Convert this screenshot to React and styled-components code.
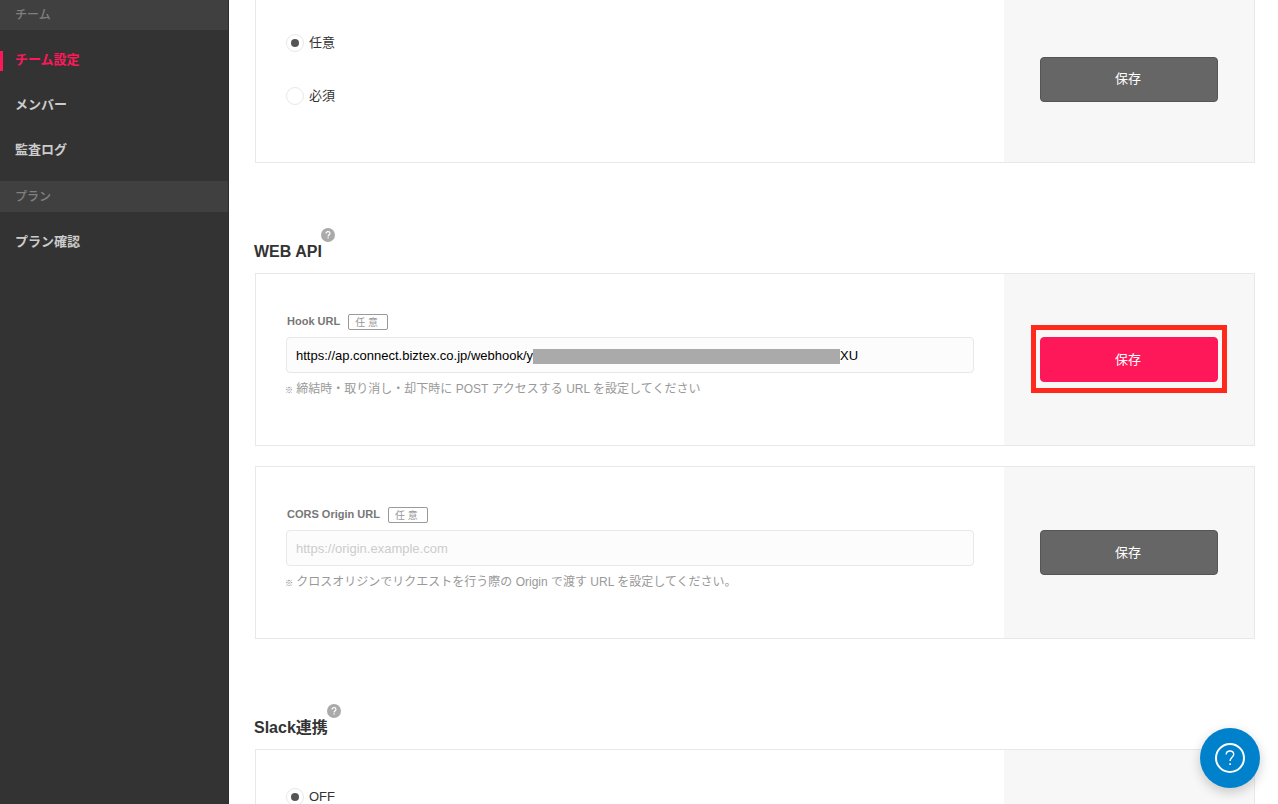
import React from 'react';
import styled, { createGlobalStyle, css } from 'styled-components';

const GlobalStyle = createGlobalStyle`
  *, *::before, *::after { box-sizing: border-box; }
  body {
    margin: 0;
    background: #fff;
    color: #333;
    font-family: "Liberation Sans", "Noto Sans CJK JP", sans-serif;
    font-size: 13px;
  }
  button, input { font: inherit; }
`;

const Page = styled.div`
  display: grid;
  grid-template-columns: 229px minmax(0, 1fr);
  height: 100vh;
  overflow: hidden;
`;

const Sidebar = styled.nav`
  margin-top: -1px;
  background: #333;
  border-right: 1px solid #2f2f2f;
`;

const NavHeading = styled.h3`
  margin: 0;
  padding: 2px 15px 0;
  font-size: 12px;
  font-weight: 500;
  line-height: 29px;
  color: #808080;
  background: #404040;
`;

const NavList = styled.ul`
  margin: 0;
  padding: 7px 0 9px;
  list-style: none;
`;

const NavLink = styled.a`
  display: flex;
  align-items: center;
  height: 45px;
  padding-bottom: 2px;
  font-weight: 700;
  text-decoration: none;
  color: ${(p) => (p.$active ? '#ff1859' : '#ccc')};

  &::before {
    content: '';
    width: 3px;
    height: 20px;
    margin: 4px 12px 0 0;
    background: ${(p) => (p.$active ? '#ff1859' : 'transparent')};
  }
`;

const Main = styled.main`
  margin-top: -5px;
  padding: 0 23px 0 26px;
`;

const SectionHeader = styled.header`
  display: flex;
  align-items: flex-end;
  min-height: 35px;
  margin: 65px 0 10px;
`;

const SectionTitle = styled.h2`
  margin: 0 0 0 -1px;
  font-size: 16px;
  line-height: 22px;
  color: #333;
`;

const HelpButton = styled.button`
  align-self: flex-start;
  display: grid;
  place-items: center;
  width: 14px;
  height: 14px;
  margin-left: -1px;
  padding: 0;
  border: 0;
  border-radius: 50%;
  color: #fff;
  background: #aaa;
`;

const Panel = styled.form`
  display: grid;
  grid-template-columns: minmax(0, 1fr) 250px;
  border: 1px solid #e8e8e8;

  & + & { margin-top: 20px; }
`;

const PanelBody = styled.div`
  padding: ${(p) => (p.$options ? '38px 30px 57px' : '40px 30px 48px')};
`;

const PanelSide = styled.div`
  display: flex;
  align-items: center;
  justify-content: center;
  background: #f7f7f7;
`;

const SaveButton = styled.button`
  position: relative;
  width: 178px;
  height: 45px;
  padding: 0 2px 3px 0;
  border: 1px solid ${(p) => (p.$primary ? '#ff1859' : '#555')};
  border-radius: 4px;
  color: #fff;
  background: ${(p) => (p.$primary ? '#ff1859' : '#666')};

  ${(p) => p.$marked && css`
    &::after {
      content: '';
      position: absolute;
      inset: -13px -10px -12px;
      border: 5px solid #ff2a1c;
    }
  `}
`;

const RadioList = styled.div`
  display: grid;
  gap: 35px;
`;

const RadioLabel = styled.label`
  display: flex;
  align-items: flex-start;
  gap: 5px;
  height: 18px;
  line-height: 18px;
`;

const Radio = styled.input`
  appearance: none;
  display: grid;
  place-items: center;
  width: 18px;
  height: 18px;
  margin: 0;
  border: 1px solid #e8e8e8;
  border-radius: 50%;
  background: #fff;

  &:checked::before {
    content: '';
    width: 8px;
    height: 8px;
    border-radius: 50%;
    background: #555;
  }
`;

const LabelRow = styled.div`
  display: flex;
  gap: 8px;
  height: 16px;
  margin-bottom: 7px;
  padding-left: 1px;
`;

const FieldLabel = styled.label`
  font-size: 11px;
  font-weight: 700;
  line-height: 14px;
  color: #777;
`;

const OptionalTag = styled.span`
  width: 40px;
  height: 16px;
  padding-left: 6px;
  border: 1px solid #999;
  border-radius: 2px;
  font-size: 10px;
  line-height: 16px;
  color: #999;
`;

const FieldBox = styled.div`
  display: flex;
  align-items: center;
  height: 36px;
  padding: 0 10px 0 9px;
  border: 1px solid #e8e8e8;
  border-radius: 4px;
  background: #fcfcfc;
`;

const TextInput = styled.input`
  flex: ${(p) => (p.$fit ? '0 0 auto' : '1 1 0')};
  ${(p) => p.$fit && 'field-sizing: content;'}
  min-width: 0;
  height: 34px;
  padding: 0;
  border: 0;
  outline: 0;
  color: #000;
  background: transparent;

  &::placeholder { color: #ccc; opacity: 1; }
`;

const Mask = styled.span`
  flex: 0 1 307px;
  height: 15px;
  margin-top: 2px;
  background: #aaa;
`;

const Hint = styled.p`
  height: 17px;
  margin: 7px 0 0 -1px;
  font-size: 12px;
  line-height: 18px;
  color: #999;
`;

const HintMark = styled.span`
  font-size: 8px;
  font-weight: 700;
  line-height: 1;
  color: #777;
`;

const ChatButton = styled.button`
  position: fixed;
  right: 18px;
  bottom: 16px;
  display: grid;
  place-items: center;
  width: 60px;
  height: 60px;
  padding: 0;
  border: 0;
  border-radius: 50%;
  color: #fff;
  background: #0081cc;
  box-shadow: 0 4px 12px rgba(0, 0, 0, 0.2);
`;

function NavGroup({ title, items }) {
  return (
    <>
      <NavHeading>{title}</NavHeading>
      <NavList>
        {items.map((item) => (
          <li key={item}>
            <NavLink href="#" $active={item === 'チーム設定'}>{item}</NavLink>
          </li>
        ))}
      </NavList>
    </>
  );
}

function Section({ title }) {
  return (
    <SectionHeader>
      <SectionTitle>{title}</SectionTitle>
      <HelpButton type="button" aria-label="ヘルプ">
        <svg width="14" height="14" viewBox="0 0 14 14" fill="none" stroke="currentColor" strokeWidth="1.2">
          <path d="M5 5.6C5 4.3 5.8 3.6 7 3.6s2 .7 2 1.7c0 1.4-1.9 1.5-1.9 3.1" />
          <path d="M7.1 9.3v1.3" />
        </svg>
      </HelpButton>
    </SectionHeader>
  );
}

function Options({ name, values }) {
  return (
    <RadioList>
      {values.map((value, i) => (
        <RadioLabel key={value}>
          <Radio type="radio" name={name} defaultChecked={i === 0} />
          {value}
        </RadioLabel>
      ))}
    </RadioList>
  );
}

function Field({ id, label, hint, children }) {
  return (
    <>
      <LabelRow>
        <FieldLabel htmlFor={id}>{label}</FieldLabel>
        <OptionalTag>任 意</OptionalTag>
      </LabelRow>
      <FieldBox>{children}</FieldBox>
      <Hint><HintMark>※</HintMark> {hint}</Hint>
    </>
  );
}

export default function App() {
  return (
    <>
      <GlobalStyle />
      <Page>
        <Sidebar>
          <NavGroup title="チーム" items={['チーム設定', 'メンバー', '監査ログ']} />
          <NavGroup title="プラン" items={['プラン確認']} />
        </Sidebar>
        <Main>
          <Panel>
            <PanelBody $options>
              <Options name="requirement" values={['任意', '必須']} />
            </PanelBody>
            <PanelSide><SaveButton type="button">保存</SaveButton></PanelSide>
          </Panel>

          <Section title="WEB API" />
          <Panel>
            <PanelBody>
              <Field
                id="hook-url"
                label="Hook URL"
                hint="締結時・取り消し・却下時に POST アクセスする URL を設定してください"
              >
                <TextInput id="hook-url" $fit defaultValue="https://ap.connect.biztex.co.jp/webhook/y" />
                <Mask />
                <TextInput aria-label="Hook URL" defaultValue="XU" />
              </Field>
            </PanelBody>
            <PanelSide><SaveButton type="button" $primary $marked>保存</SaveButton></PanelSide>
          </Panel>
          <Panel>
            <PanelBody>
              <Field
                id="cors-url"
                label="CORS Origin URL"
                hint="クロスオリジンでリクエストを行う際の Origin で渡す URL を設定してください。"
              >
                <TextInput id="cors-url" placeholder="https://origin.example.com" />
              </Field>
            </PanelBody>
            <PanelSide><SaveButton type="button">保存</SaveButton></PanelSide>
          </Panel>

          <Section title="Slack連携" />
          <Panel>
            <PanelBody $options>
              <Options name="slack" values={['OFF']} />
            </PanelBody>
            <PanelSide />
          </Panel>
        </Main>
      </Page>
      <ChatButton type="button" aria-label="サポート">
        <svg width="30" height="30" viewBox="0 0 30 30" fill="none" stroke="currentColor">
          <circle cx="15" cy="15" r="14" strokeWidth="2" />
          <path d="M11.2 11.6c0-2.3 1.5-3.6 3.8-3.6s3.7 1.3 3.7 3.2c0 3-3.6 3-3.6 6.8" strokeWidth="1.4" />
          <path d="M15.1 20.2v1.9" strokeWidth="1.6" />
        </svg>
      </ChatButton>
    </>
  );
}
